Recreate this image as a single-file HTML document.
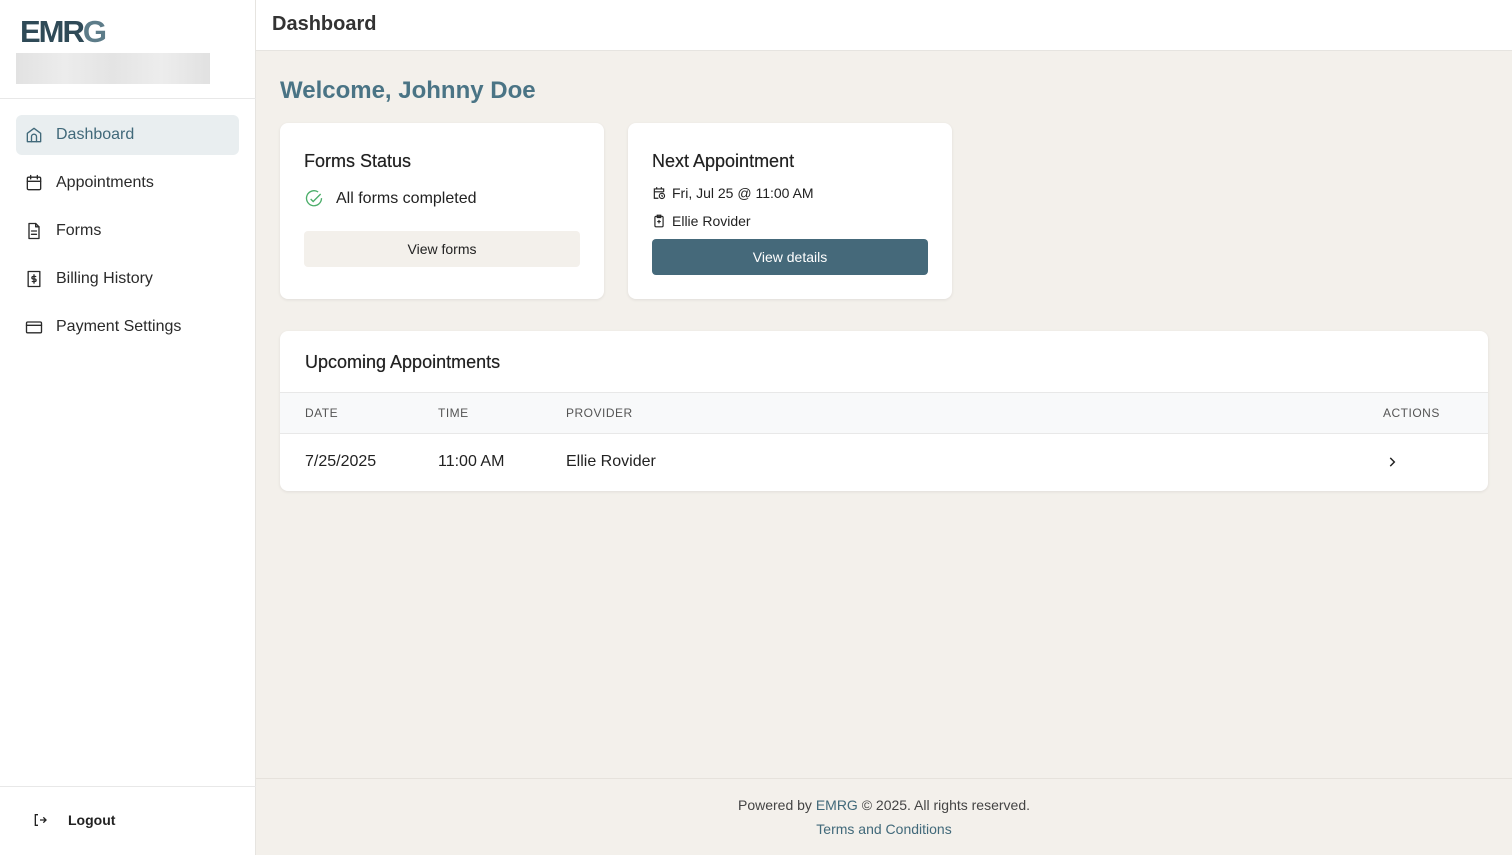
<!DOCTYPE html>
<html><head><meta charset="utf-8"><style>
*{box-sizing:border-box;margin:0;padding:0}
body{width:1512px;height:855px;overflow:hidden;font-family:"Liberation Sans",sans-serif;background:#f3f0eb;color:#222;position:relative}
.side{position:absolute;left:0;top:0;width:256px;height:855px;background:#fff;border-right:1px solid #e6e4e0}
.logo{position:absolute;left:20px;top:14px;font-size:31px;font-weight:bold;color:#2f4a57;letter-spacing:-2px}
.logo span{color:#5d7c89}
.blur{position:absolute;left:16px;top:53px;width:194px;height:31px;background:linear-gradient(90deg,#e2e2e2,#ececec,#e4e4e4,#ededed,#e1e1e1);}
.sep{position:absolute;left:0;top:98px;width:256px;border-top:1px solid #e8e8e8}
.nav{position:absolute;left:16px;width:223px;height:40px;display:flex;align-items:center;padding-left:8px;font-size:16px;color:#2a2a2a;border-radius:6px}
.nav svg{width:20px;height:20px;margin-right:12px;fill:none;stroke:#2a2a2a;stroke-width:1.6;stroke-linecap:round;stroke-linejoin:round}
.nav.act{background:#e9eef0;color:#41697a}.nav.act svg{stroke:#41697a}
.bsep{position:absolute;left:0;top:786px;width:256px;border-top:1px solid #e8e8e8}
.top{position:absolute;left:256px;top:0;right:0;height:51px;background:#fff;border-bottom:1px solid #e6e4e0}
.top h1{position:absolute;left:16px;top:13px;font-size:20px;color:#333;font-weight:bold}
.welcome{position:absolute;left:280px;top:77px;font-size:24px;font-weight:bold;color:#4a7485}
.card{position:absolute;background:#fff;border-radius:8px;box-shadow:0 1px 3px rgba(0,0,0,.08)}
.card h2{font-size:18px;font-weight:normal;color:#222;text-shadow:0 0 .4px #222}
.btn{position:absolute;height:36px;border-radius:4px;display:flex;align-items:center;justify-content:center;font-size:14px}
.foot{position:absolute;left:256px;right:0;top:778px;border-top:1px solid #e6e2dc;text-align:center;font-size:14px;color:#444}
</style></head><body>
<div class="side">
<div class="logo">EMR<span>G</span></div>
<div class="blur"></div>
<div class="sep"></div>
<div class="nav act" style="top:115px"><svg viewBox="0 0 24 24"><path d="M4 10l8-6 8 6v10H4z"/><path d="M9 20v-6a3 3 0 016 0v6"/></svg>Dashboard</div>
<div class="nav" style="top:163px"><svg viewBox="0 0 24 24"><rect x="4" y="5" width="16" height="15" rx="1.5"/><path d="M4 10h16M8 3v4M16 3v4"/></svg>Appointments</div>
<div class="nav" style="top:211px"><svg viewBox="0 0 24 24"><path d="M6 3h8l4 4v14H6z"/><path d="M14 3v4h4M9 12h6M9 16h6"/></svg>Forms</div>
<div class="nav" style="top:259px"><svg viewBox="0 0 24 24"><rect x="5" y="3" width="14" height="18"/><path d="M14 9h-3a1.5 1.5 0 000 3h2a1.5 1.5 0 010 3h-3M12 7v10"/></svg>Billing History</div>
<div class="nav" style="top:307px"><svg viewBox="0 0 24 24"><rect x="3" y="6" width="18" height="13" rx="1.5"/><path d="M3 10h18"/></svg>Payment Settings</div>
<div class="bsep"></div>
<div style="position:absolute;left:32px;top:812px;font-size:14px;font-weight:bold;display:flex;align-items:center"><svg width="16" height="16" viewBox="0 0 24 24" fill="none" stroke="#222" stroke-width="2" style="margin-right:20px"><path d="M9 4H5v16h4M12 12h9M17 8l4 4-4 4"/></svg>Logout</div>
</div>
<div class="top"><h1>Dashboard</h1></div>
<div class="welcome">Welcome, Johnny Doe</div>
<div class="card" style="left:280px;top:123px;width:324px;height:176px">
<h2 style="position:absolute;left:24px;top:28px">Forms Status</h2>
<div style="position:absolute;left:24px;top:66px;display:flex;align-items:center;font-size:16px;color:#222"><svg width="20" height="20" viewBox="0 0 24 24" fill="none" stroke="#4cae6a" stroke-width="1.6" style="margin-right:12px"><path d="M21 11a9 9 0 11-4-7.4"/><path d="M8 12l3 3 9-9"/></svg>All forms completed</div>
<div class="btn" style="left:24px;top:108px;width:276px;background:#f3f0eb;color:#222">View forms</div>
</div>
<div class="card" style="left:628px;top:123px;width:324px;height:176px">
<h2 style="position:absolute;left:24px;top:28px">Next Appointment</h2>
<div style="position:absolute;left:24px;top:62px;font-size:14px;color:#222"><svg width="14" height="14" viewBox="0 0 24 24" fill="none" stroke="#222" stroke-width="2" style="vertical-align:-2px;margin-right:6px"><path d="M11 21H4V5h16v5M4 10h16M8 2v4M16 2v4"/><circle cx="17" cy="17" r="4.5"/><path d="M17 15v2l1.5 1"/></svg>Fri, Jul 25 @ 11:00 AM</div>
<div style="position:absolute;left:24px;top:90px;font-size:14px;color:#222"><svg width="14" height="14" viewBox="0 0 24 24" fill="none" stroke="#222" stroke-width="2" style="vertical-align:-2px;margin-right:6px"><rect x="5" y="4" width="14" height="18" rx="2"/><path d="M9 2h6v4H9zM12 10v6M9 13h6"/></svg>Ellie Rovider</div>
<div class="btn" style="left:24px;top:116px;width:276px;background:#45697a;color:#fff">View details</div>
</div>
<div class="card" style="left:280px;top:331px;width:1208px;height:160px">
<h2 style="position:absolute;left:25px;top:21px">Upcoming Appointments</h2>
<div style="position:absolute;left:0;right:0;top:61px;height:42px;background:#f8f9fa;border-top:1px solid #e8e8e8;border-bottom:1px solid #e8e8e8;font-size:12px;color:#555;letter-spacing:.5px">
<span style="position:absolute;left:25px;top:13px">DATE</span><span style="position:absolute;left:158px;top:13px">TIME</span><span style="position:absolute;left:286px;top:13px">PROVIDER</span><span style="position:absolute;left:1103px;top:13px">ACTIONS</span></div>
<div style="font-size:16px;color:#222"><span style="position:absolute;left:25px;top:122px">7/25/2025</span><span style="position:absolute;left:158px;top:122px">11:00 AM</span><span style="position:absolute;left:286px;top:122px">Ellie Rovider</span>
<svg style="position:absolute;left:1105px;top:124px" width="14" height="14" viewBox="0 0 24 24" fill="none" stroke="#222" stroke-width="2.5"><path d="M9 5l7 7-7 7"/></svg></div>
</div>
<div class="foot"><div style="margin-top:18px">Powered by <span style="color:#41697a">EMRG</span> © 2025. All rights reserved.</div><div style="margin-top:8px;color:#41697a">Terms and Conditions</div></div>
</body></html>
